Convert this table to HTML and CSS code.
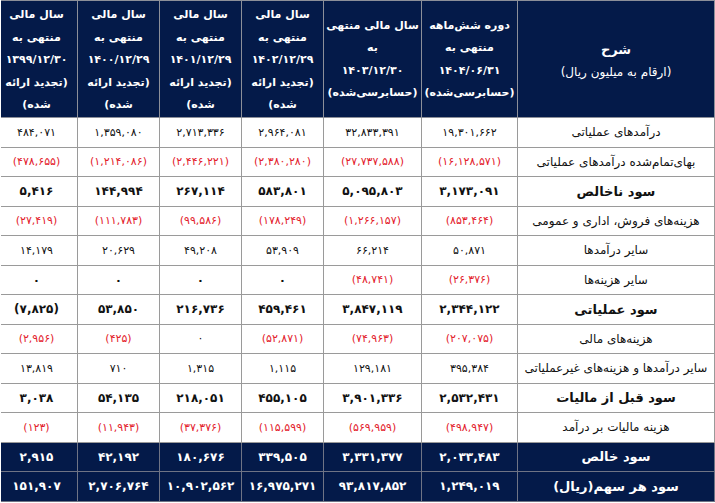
FILE: index.html
```html
<!DOCTYPE html>
<html lang="fa" dir="rtl">
<head>
<meta charset="utf-8">
<link rel="stylesheet" href="styles.css">
</head>
<body>
<div class="frame">
<table class="fin">
<colgroup>
<col class="c-label"><col class="c-6m"><col class="c-1403"><col class="c-yr"><col class="c-yr"><col class="c-yr"><col class="c-yr">
</colgroup>
<thead>
<tr>
<th class="h-label"><span class="h-title">شرح</span><br>(ارقام به میلیون ریال)</th>
<th class="h-four">دوره شش‌ماهه<br>منتهی به<br>۱۴۰۴/۰۶/۳۱<br>(حسابرسی‌شده)</th>
<th class="h-four">سال مالی منتهی<br>به<br>۱۴۰۳/۱۲/۳۰<br>(حسابرسی‌شده)</th>
<th>سال مالی<br>منتهی به<br>۱۴۰۲/۱۲/۲۹<br>(تجدید ارائه<br>شده)</th>
<th>سال مالی<br>منتهی به<br>۱۴۰۱/۱۲/۲۹<br>(تجدید ارائه<br>شده)</th>
<th>سال مالی<br>منتهی به<br>۱۴۰۰/۱۲/۲۹<br>(تجدید ارائه<br>شده)</th>
<th>سال مالی<br>منتهی به<br>۱۳۹۹/۱۲/۳۰<br>(تجدید ارائه<br>شده)</th>
</tr>
</thead>
<tbody>
<tr>
<td class="lbl">درآمدهای عملیاتی</td>
<td>۱۹,۳۰۱,۶۶۲</td><td>۳۲,۸۳۳,۳۹۱</td><td>۲,۹۶۴,۰۸۱</td><td>۲,۷۱۳,۳۳۶</td><td>۱,۳۵۹,۰۸۰</td><td>۴۸۴,۰۷۱</td>
</tr>
<tr>
<td class="lbl">بهای‌تمام‌شده درآمدهای عملیاتی</td>
<td class="neg">(۱۶,۱۲۸,۵۷۱)</td><td class="neg">(۲۷,۷۳۷,۵۸۸)</td><td class="neg">(۲,۳۸۰,۲۸۰)</td><td class="neg">(۲,۴۴۶,۲۲۱)</td><td class="neg">(۱,۲۱۴,۰۸۶)</td><td class="neg">(۴۷۸,۶۵۵)</td>
</tr>
<tr class="strong">
<td class="lbl">سود ناخالص</td>
<td>۳,۱۷۳,۰۹۱</td><td>۵,۰۹۵,۸۰۳</td><td>۵۸۳,۸۰۱</td><td>۲۶۷,۱۱۴</td><td>۱۴۴,۹۹۴</td><td>۵,۴۱۶</td>
</tr>
<tr>
<td class="lbl">هزینه‌های فروش، اداری و عمومی</td>
<td class="neg">(۸۵۳,۴۶۴)</td><td class="neg">(۱,۲۶۶,۱۵۷)</td><td class="neg">(۱۷۸,۲۴۹)</td><td class="neg">(۹۹,۵۸۶)</td><td class="neg">(۱۱۱,۷۸۳)</td><td class="neg">(۲۷,۴۱۹)</td>
</tr>
<tr>
<td class="lbl">سایر درآمدها</td>
<td>۵۰,۸۷۱</td><td>۶۶,۲۱۴</td><td>۵۳,۹۰۹</td><td>۴۹,۲۰۸</td><td>۲۰,۶۲۹</td><td>۱۴,۱۷۹</td>
</tr>
<tr>
<td class="lbl">سایر هزینه‌ها</td>
<td class="neg">(۲۶,۳۷۶)</td><td class="neg">(۴۸,۷۴۱)</td><td class="zero">۰</td><td class="zero">۰</td><td class="zero">۰</td><td class="zero">۰</td>
</tr>
<tr class="strong">
<td class="lbl">سود عملیاتی</td>
<td>۲,۳۴۴,۱۲۲</td><td>۳,۸۴۷,۱۱۹</td><td>۴۵۹,۴۶۱</td><td>۲۱۶,۷۳۶</td><td>۵۳,۸۵۰</td><td>(۷,۸۲۵)</td>
</tr>
<tr>
<td class="lbl">هزینه‌های مالی</td>
<td class="neg">(۲۰۷,۰۷۵)</td><td class="neg">(۷۴,۹۶۳)</td><td class="neg">(۵۲,۸۷۱)</td><td>۰</td><td class="neg">(۴۲۵)</td><td class="neg">(۲,۹۵۶)</td>
</tr>
<tr>
<td class="lbl">سایر درآمدها و هزینه‌های غیرعملیاتی</td>
<td>۳۹۵,۳۸۴</td><td>۱۲۹,۱۸۱</td><td>۱,۱۱۵</td><td>۱,۳۱۵</td><td>۷۱۰</td><td>۱۳,۸۱۹</td>
</tr>
<tr class="strong">
<td class="lbl">سود قبل از مالیات</td>
<td>۲,۵۳۲,۴۳۱</td><td>۳,۹۰۱,۳۳۶</td><td>۴۵۵,۱۰۵</td><td>۲۱۸,۰۵۱</td><td>۵۴,۱۳۵</td><td>۳,۰۳۸</td>
</tr>
<tr>
<td class="lbl">هزینه مالیات بر درآمد</td>
<td class="neg">(۴۹۸,۹۴۷)</td><td class="neg">(۵۶۹,۹۵۹)</td><td class="neg">(۱۱۵,۵۹۹)</td><td class="neg">(۳۷,۳۷۶)</td><td class="neg">(۱۱,۹۴۳)</td><td class="neg">(۱۲۳)</td>
</tr>
<tr class="dark">
<td class="lbl">سود خالص</td>
<td>۲,۰۳۳,۴۸۳</td><td>۳,۳۳۱,۳۷۷</td><td>۳۳۹,۵۰۵</td><td>۱۸۰,۶۷۶</td><td>۴۲,۱۹۲</td><td>۲,۹۱۵</td>
</tr>
<tr class="dark">
<td class="lbl">سود هر سهم(ریال)</td>
<td>۱,۲۴۹,۰۱۹</td><td>۹۳,۸۱۷,۸۵۲</td><td>۱۶,۹۷۵,۲۷۱</td><td>۱۰,۹۰۲,۵۶۲</td><td>۲,۷۰۶,۷۶۴</td><td>۱۵۱,۹۰۷</td>
</tr>
</tbody>
</table>
</div>
</body>
</html>
```
FILE: styles.css
```css
html, body {
  margin: 0;
  padding: 0;
  background: #ffffff;
  overflow: hidden;
}
.frame {
  width: 714px;
  overflow: hidden;
  direction: rtl;
}
.fin {
  direction: rtl;
  border-collapse: collapse;
  table-layout: fixed;
  width: 719px;
  font-family: "DejaVu Sans", Tahoma, sans-serif;
  font-size: 11px;
  color: #111;
}
.c-label { width: 197px; }
.c-6m { width: 96px; }
.c-1403 { width: 98px; }
.c-yr { width: 82px; }

.fin th {
  background: #041a49;
  color: #fff;
  font-weight: bold;
  font-size: 11px;
  line-height: 22.5px;
  height: 113px;
  padding: 3px 2px 0;
  border: 1px solid #8c8f99;
  text-align: center;
  vertical-align: middle;
}
.fin th.h-four { padding-top: 1px; height: 115px; }
.fin th.h-label {
  font-weight: normal;
  font-size: 12px;
  line-height: 22px;
  padding-top: 3px;
  height: 113px;
}
.h-title { font-weight: bold; font-size: 13px; }

.fin td {
  height: 28.5px;
  padding: 0 2px;
  border: 1px solid #9a9a9a;
  text-align: center;
  vertical-align: middle;
  white-space: nowrap;
}
.fin td.lbl { font-size: 12px; }
.fin td.neg { color: #e3212b; }
.fin td.zero { font-weight: bold; font-size: 12px; }
.fin tr.strong td { font-weight: bold; font-size: 12px; }
.fin tr.strong td.lbl { font-size: 13px; }
.fin tr.dark td {
  background: #041a49;
  color: #fff;
  font-weight: bold;
  font-size: 12px;
  border-color: #6f7485;
}
.fin tr.dark td.lbl { font-size: 13px; }
```
